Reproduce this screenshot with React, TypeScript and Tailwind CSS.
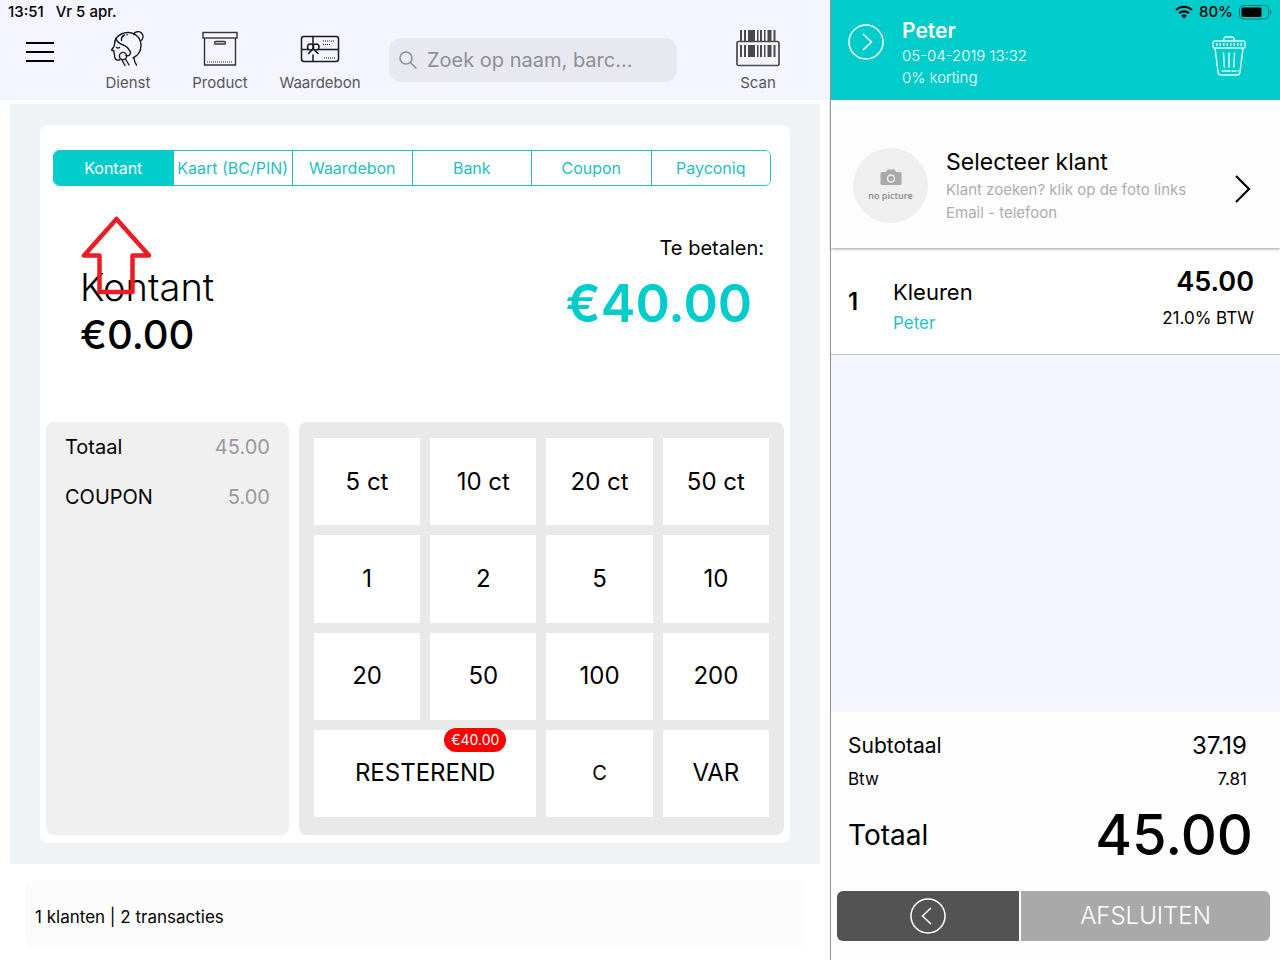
import { useState } from 'react';
import type { ReactNode } from 'react';

const METHODS = ['Kontant', 'Kaart (BC/PIN)', 'Waardebon', 'Bank', 'Coupon', 'Payconiq'];

const COINS = ['5 ct', '10 ct', '20 ct', '50 ct', '1', '2', '5', '10', '20', '50', '100', '200'];

const PAYMENTS = [
  { label: 'Totaal', amount: '45.00' },
  { label: 'COUPON', amount: '5.00' },
];

function ServiceIcon() {
  return (
    <svg width="36" height="36" viewBox="0 0 36 36" fill="none" stroke="#1a1a1a" strokeWidth="1.4" strokeLinecap="round" strokeLinejoin="round">
      <path d="M6 7.500C9 3.500 13 1.500 18 1.500c7.500 0 13 5.500 13 13 0 6-3 10-8 12.500" />
      <path d="M23.500 3.500A5 5 0 1 1 30.500 10" />
      <path d="M6 7.500c-1.500 2-1.500 4-1.500 6 0 2-1.500 3.500-3 5.500l2.500 1c-.5 1.500 0 2.500.5 3.500 0 3 .5 5 2.500 5.500 1 .3 2 0 3-.5" />
      <path d="M6 7.500c1 3.500 3.500 5 6 6 4 1.500 6 2.500 7 5.500 1.500 1.500 2 3.500.5 5-1 1-2.500.8-3.500.5" />
      <path d="M11.500 9.500c-.5-3 1-4.500 3-5.500M17 3.800h.2" />
      <path d="M6.500 16.500c1 .8 2 .8 3 0" />
      <circle cx="13" cy="25" r="3.600" />
      <path d="M12 29l3 5.500M15.500 28l3.500 6M24 27c.3 3 1 5 2.500 7" />
    </svg>
  );
}

function BoxIcon() {
  return (
    <svg width="36" height="36" viewBox="0 0 36 36" fill="none" stroke="#333" strokeWidth="1.400">
      <rect x="1" y="1.500" width="34" height="5.500" />
      <path d="M2.500 7v27h31V7" />
      <rect x="12.500" y="10.500" width="11" height="2.500" rx="1.250" />
      <path d="M5 31h26" strokeDasharray="1 1" strokeWidth="1.200" />
    </svg>
  );
}

function GiftCardIcon() {
  return (
    <svg width="40" height="36" viewBox="0 0 40 36" fill="none" stroke="#1a1a1a" strokeWidth="1.500" strokeLinecap="round">
      <rect x="1.500" y="5.500" width="37" height="25" rx="2.500" />
      <path d="M13 5.500v8M13 24v6.500M1.500 18.500H8M18 18.500h20.500" />
      <circle cx="10.500" cy="16" r="3" />
      <circle cx="16" cy="16" r="3" />
      <path d="M13 18l-4.500 4.500M13 18l5 4.500" />
      <path d="M23 10h12M23 13.500h8M24 27h11" strokeDasharray="1 1" strokeWidth="1.200" strokeLinecap="butt" />
    </svg>
  );
}

function ScanIcon() {
  return (
    <svg width="44" height="37" viewBox="0 0 44 37" fill="#4a4a4a">
      <path d="M4 0h2v11H4zM8 0h2v11H8zM12 0h7v11h-7zM21 0h1.500v11H21zM24 0h2v11h-2zM28 0h1.500v11H28zM31.500 0h4v11h-4zM37.500 0h2v11h-2z" />
      <rect x="1" y="11.500" width="42" height="24" rx="1.500" fill="none" stroke="#4a4a4a" strokeWidth="1.700" />
      <path d="M4 15h2v12H4zM8 15h2v12H8zM12 15h7v12h-7zM21 15h1.500v12H21zM24 15h2v12h-2zM28 15h1.500v12H28zM31.500 15h4v12h-4zM37.500 15h2v12h-2z" />
    </svg>
  );
}

function TrashIcon() {
  return (
    <svg width="34" height="40" viewBox="0 0 34 40" fill="none" stroke="#dffafa" strokeWidth="1.500" strokeLinecap="round" strokeLinejoin="round">
      <path d="M11 5l1.500-3.500C13 1 13.500 1 14 1h6c.5 0 1 0 1.500.5L23 5" />
      <rect x="1" y="5" width="32" height="7" rx="1.500" />
      <path d="M4 8.500h26" strokeDasharray="1.500 2" strokeWidth="3" strokeLinecap="butt" />
      <path d="M3 12l3 24c.2 1.800 1 3 3 3h16c2 0 2.800-1.200 3-3l3-24" />
      <path d="M11.500 17l.8 14M17 17v14M22.500 17l-.8 14M10 35h8M20 35h4M26 35h.1" />
    </svg>
  );
}

function CircleChevron({ left = false }: { left?: boolean }) {
  return (
    <svg width="36" height="36" viewBox="0 0 36 36" fill="none" stroke="#fff" strokeWidth="1.500">
      <circle cx="18" cy="18" r="17" />
      {left ? <path d="M21 10l-8.500 8 8.500 8" /> : <path d="M15 10l8.500 8-8.500 8" />}
    </svg>
  );
}

function WifiIcon() {
  return (
    <svg width="18" height="14" viewBox="0 0 18 14" fill="none" stroke="#000" strokeWidth="2.200">
      <path d="M1 5a11.500 11.500 0 0 1 16 0M4 8.300a7.200 7.200 0 0 1 10 0" />
      <path d="M9 13.500L6.200 10.700a4 4 0 0 1 5.600 0z" fill="#000" stroke="none" />
    </svg>
  );
}

function BatteryIcon() {
  return (
    <svg width="33" height="15" viewBox="0 0 33 15" fill="none">
      <rect x=".5" y=".5" width="29" height="13.500" rx="3.500" stroke="#047c7c" />
      <rect x="2.500" y="2.500" width="20" height="9.500" rx="1.500" fill="#000" />
      <path d="M31 5v5c1.500-.5 1.500-4.500 0-5z" fill="#047c7c" />
    </svg>
  );
}

function ToolButton({ label, icon, className }: { label: string; icon: ReactNode; className: string }) {
  return (
    <button className={`flex flex-col items-center gap-1.5 text-[15px] leading-5 text-[#55555a] ${className}`}>
      {icon}
      {label}
    </button>
  );
}

function Register() {
  const [method, setMethod] = useState('Kontant');

  return (
    <main className="flex flex-1 flex-col">
      <header className="h-[100px] bg-[#f5f5ff]">
        <div className="flex h-7 gap-3 px-2 pt-1 text-[15px] leading-4 font-medium">
          <span>13:51</span>
          <span>Vr 5 apr.</span>
        </div>
        <div className="flex items-start pr-[50px] pl-[26px]">
          <button aria-label="Menu" className="mt-3.5 flex w-7 flex-col gap-[7px]">
            <span className="h-0.5 w-full bg-black" />
            <span className="h-0.5 w-full bg-black" />
            <span className="h-0.5 w-full bg-black" />
          </button>
          <ToolButton label="Dienst" icon={<ServiceIcon />} className="mt-[3px] ml-8 w-[84px]" />
          <ToolButton label="Product" icon={<BoxIcon />} className="mt-[3px] w-[100px]" />
          <ToolButton label="Waardebon" icon={<GiftCardIcon />} className="mt-[3px] w-[100px]" />
          <label className="mt-2.5 ml-[19px] flex h-11 max-w-[288px] flex-1 items-center gap-2.5 rounded-xl bg-[#e8e8f1] px-2.5">
            <svg className="shrink-0" width="18" height="18" viewBox="0 0 18 18" fill="none" stroke="#8e8e93" strokeWidth="1.500">
              <circle cx="7" cy="7" r="6" />
              <path d="M11.500 11.500l6 6" />
            </svg>
            <input
              type="search"
              aria-label="Zoeken"
              placeholder="Zoek op naam, barc..."
              className="w-full min-w-0 bg-transparent text-xl outline-none placeholder:text-[#8e8e93]"
            />
          </label>
          <ToolButton label="Scan" icon={<ScanIcon />} className="mt-0.5 ml-auto" />
        </div>
      </header>

      <div className="mx-2.5 mt-1 flex flex-1 flex-col bg-[#eff3f5] px-[30px] py-[21px]">
        <section className="flex flex-1 flex-col rounded-lg bg-white px-1.5 pt-[25px] pb-2">
          <div className="mr-[13px] ml-[7px] flex h-9 divide-x divide-[#1fc4c4] overflow-hidden rounded-md border border-[#1fc4c4]">
            {METHODS.map((m) => (
              <button
                key={m}
                onClick={() => setMethod(m)}
                className={`flex-1 basis-0 text-base whitespace-nowrap ${
                  m === method ? 'bg-[#00cccc] text-white' : 'bg-white text-[#1fc0c0]'
                }`}
              >
                {m}
              </button>
            ))}
          </div>

          <div className="flex h-[236px] justify-between pr-5 pl-[34px]">
            <div className="relative pt-[77px]">
              <h1 className="text-[38px] leading-12 font-light">{method}</h1>
              <p className="text-[40px] leading-12 font-medium">€0.00</p>
              <svg className="absolute top-[30px] left-0" width="72" height="80" viewBox="0 0 72 80" fill="none" stroke="#ec1c24" strokeWidth="4.500" strokeLinejoin="round">
                <path d="M36.500 3L4 39.500h15.500V76h33V39.500H69z" />
              </svg>
            </div>
            <div className="pt-11 text-right">
              <p className="text-xl leading-9">Te betalen:</p>
              <p className="pr-3 text-[52px] leading-[76px] font-semibold text-[#00cccc]">€40.00</p>
            </div>
          </div>

          <div className="flex flex-1 gap-2.5">
            <dl className="w-1/3 rounded-lg bg-[#f0f0f0] px-[19px]">
              {PAYMENTS.map((p) => (
                <div key={p.label} className="flex h-[50px] items-center justify-between text-xl">
                  <dt>{p.label}</dt>
                  <dd className="text-[#98989c]">{p.amount}</dd>
                </div>
              ))}
            </dl>
            <div className="grid w-2/3 grid-cols-4 grid-rows-4 gap-2.5 rounded-lg bg-[#e9e9e9] px-[15px] pt-4 pb-[18px] text-2xl">
              {COINS.map((c) => (
                <button key={c} className="bg-white">
                  {c}
                </button>
              ))}
              <button className="relative col-span-2 bg-white">
                RESTEREND
                <span className="absolute -top-0.5 right-[30px] rounded-full bg-[#ff0000] px-[7px] text-sm leading-6 text-white">
                  €40.00
                </span>
              </button>
              <button className="bg-white text-xl">C</button>
              <button className="bg-white">VAR</button>
            </div>
          </div>
        </section>
      </div>

      <footer className="mx-[25px] mt-4 mb-3 flex h-[68px] items-center rounded-lg bg-[#fcfcfc] px-2.5 pt-2 text-[17px]">
        1 klanten | 2 transacties
      </footer>
    </main>
  );
}

function Ticket() {
  return (
    <aside className="flex w-[450px] shrink-0 flex-col border-l border-[#909090] bg-[#f5f5ff]">
      <header className="flex h-[100px] items-start bg-[#00cccc] pl-[17px] text-white">
        <button aria-label="Openen" className="mt-6">
          <CircleChevron />
        </button>
        <div className="mt-[17px] ml-[18px]">
          <h2 className="text-[21px] leading-7 font-semibold">Peter</h2>
          <p className="text-[15px] leading-[22px] font-light">05-04-2019 13:32</p>
          <p className="text-[15px] leading-[22px] font-light">0% korting</p>
        </div>
        <div className="ml-auto flex flex-col items-end pr-2 text-black">
          <div className="flex h-6 items-center gap-1.5 text-[15px] font-medium">
            <WifiIcon />
            80%
            <BatteryIcon />
          </div>
          <button aria-label="Verwijderen" className="mt-3 mr-[26px]">
            <TrashIcon />
          </button>
        </div>
      </header>

      <button className="relative flex h-[148px] items-center bg-[#fdfdfd] pt-[22px] pr-7 pl-[22px] text-left shadow-[0_1px_3px_#999]">
        <span className="flex h-[75px] w-[75px] flex-col items-center justify-center gap-1 rounded-full bg-[#efefef] font-['Open_Sans',sans-serif] text-[9px] leading-3 font-semibold text-[#888]">
          <svg width="22" height="17" viewBox="0 0 22 17">
            <path d="M2 3h4l1.500-2.500h7L16 3h4a1.500 1.500 0 0 1 1.500 1.500v10A1.500 1.500 0 0 1 20 16H2a1.500 1.500 0 0 1-1.500-1.500v-10A1.500 1.500 0 0 1 2 3z" fill="#a9a9a9" />
            <circle cx="11" cy="9.500" r="3.500" fill="none" stroke="#efefef" strokeWidth="1.500" />
          </svg>
          no picture
        </span>
        <span className="ml-[18px] flex flex-col">
          <span className="text-[23px] leading-8">Selecteer klant</span>
          <span className="text-[15px] leading-[23px] text-[#adadad]">Klant zoeken? klik op de foto links</span>
          <span className="text-[15px] leading-[23px] text-[#adadad]">Email - telefoon</span>
        </span>
        <svg className="mt-2 ml-auto" width="18" height="28" viewBox="0 0 18 28" fill="none" stroke="#000" strokeWidth="2.200">
          <path d="M2 1l13 13L2 27" />
        </svg>
      </button>

      <div className="flex h-[107px] items-start border-b border-[#c0c0c4] bg-white pr-[26px] pl-[17px]">
        <span className="w-[45px] pt-9 text-2xl leading-9 font-semibold">1</span>
        <div className="pt-7">
          <p className="text-[22px] leading-8">Kleuren</p>
          <p className="text-[17px] leading-[30px] text-[#1fc4c8]">Peter</p>
        </div>
        <div className="ml-auto pt-4 text-right">
          <p className="text-[27px] leading-9 font-semibold">45.00</p>
          <p className="text-[17px] leading-9">21.0% BTW</p>
        </div>
      </div>

      <div className="mt-auto bg-[#fdfdfd] px-[17px] pt-4">
        <dl>
          <div className="flex h-9 items-center justify-between pr-4">
            <dt className="text-[21px]">Subtotaal</dt>
            <dd className="text-2xl">37.19</dd>
          </div>
          <div className="flex h-8 items-center justify-between pr-4 text-[17px]">
            <dt>Btw</dt>
            <dd>7.81</dd>
          </div>
          <div className="flex h-[78px] items-center justify-between pr-2.5">
            <dt className="text-[28px]">Totaal</dt>
            <dd className="text-[56px] leading-none font-medium">45.00</dd>
          </div>
        </dl>
        <div className="-mr-[7px] -ml-[11px] mt-[17px] mb-[19px] flex h-[50px] gap-0.5 overflow-hidden rounded-md">
          <button aria-label="Terug" className="flex w-[182px] items-center justify-center bg-[#535353]">
            <CircleChevron left />
          </button>
          <button className="flex-1 bg-[#a9a9a9] text-2xl font-light text-white">AFSLUITEN</button>
        </div>
      </div>
    </aside>
  );
}

export default function App() {
  return (
    <div className="flex min-h-screen bg-white font-[Inter,sans-serif] text-black">
      <Register />
      <Ticket />
    </div>
  );
}
